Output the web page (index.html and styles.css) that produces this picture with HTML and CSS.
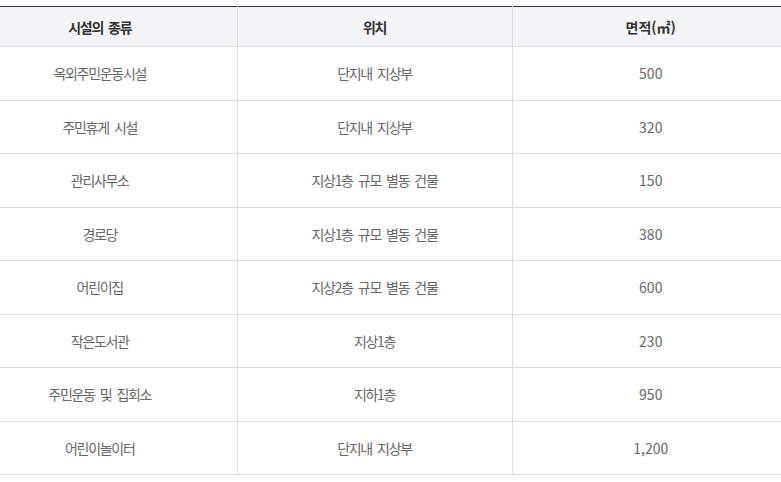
FILE: index.html
```html
<!DOCTYPE html>
<html lang="ko">
<head>
<meta charset="utf-8">
<title>시설 현황</title>
<link rel="stylesheet" href="styles.css">
</head>
<body>
<table class="facility">
  <colgroup>
    <col class="c1">
    <col class="c2">
    <col class="c3">
  </colgroup>
  <thead>
    <tr><th>시설의 종류</th><th>위치</th><th class="num">면적(㎡)</th></tr>
  </thead>
  <tbody>
    <tr><td>옥외주민운동시설</td><td>단지내 지상부</td><td class="num">500</td></tr>
    <tr><td>주민휴게 시설</td><td>단지내 지상부</td><td class="num">320</td></tr>
    <tr><td>관리사무소</td><td>지상1층 규모 별동 건물</td><td class="num">150</td></tr>
    <tr><td>경로당</td><td>지상1층 규모 별동 건물</td><td class="num">380</td></tr>
    <tr><td>어린이집</td><td>지상2층 규모 별동 건물</td><td class="num">600</td></tr>
    <tr><td>작은도서관</td><td>지상1층</td><td class="num">230</td></tr>
    <tr><td>주민운동 및 집회소</td><td>지하1층</td><td class="num">950</td></tr>
    <tr><td>어린이놀이터</td><td>단지내 지상부</td><td class="num">1,200</td></tr>
  </tbody>
</table>
</body>
</html>
```

FILE: styles.css
```css
html, body {
  margin: 0;
  padding: 0;
  background: #ffffff;
  overflow: hidden;
}

body {
  font-family: "Noto Sans CJK KR", "Noto Sans", sans-serif;
  font-size: 14px;
}

.facility {
  margin-top: 6px;
  margin-left: -37px;
  width: 826px;
  table-layout: fixed;
  border-collapse: collapse;
  border-top: 1px solid #333333;
}

.c1 { width: 274px; }
.c2 { width: 275px; }
.c3 { width: 277px; }

.facility th,
.facility td {
  text-align: center;
  vertical-align: middle;
  border-bottom: 1px solid #dddddd;
  border-left: 1px solid #dddddd;
  letter-spacing: -1.3px;
  word-spacing: 2.5px;
  padding: 0;
}

.facility th:first-child,
.facility td:first-child {
  border-left: none;
}

.facility .num {
  letter-spacing: 0;
  word-spacing: 0;
}

.facility th {
  height: 39px;
  background: #f4f5f7;
  color: #333333;
  font-weight: 700;
}

.facility td {
  height: 52.5px;
  color: #666666;
  font-weight: 400;
}
```
